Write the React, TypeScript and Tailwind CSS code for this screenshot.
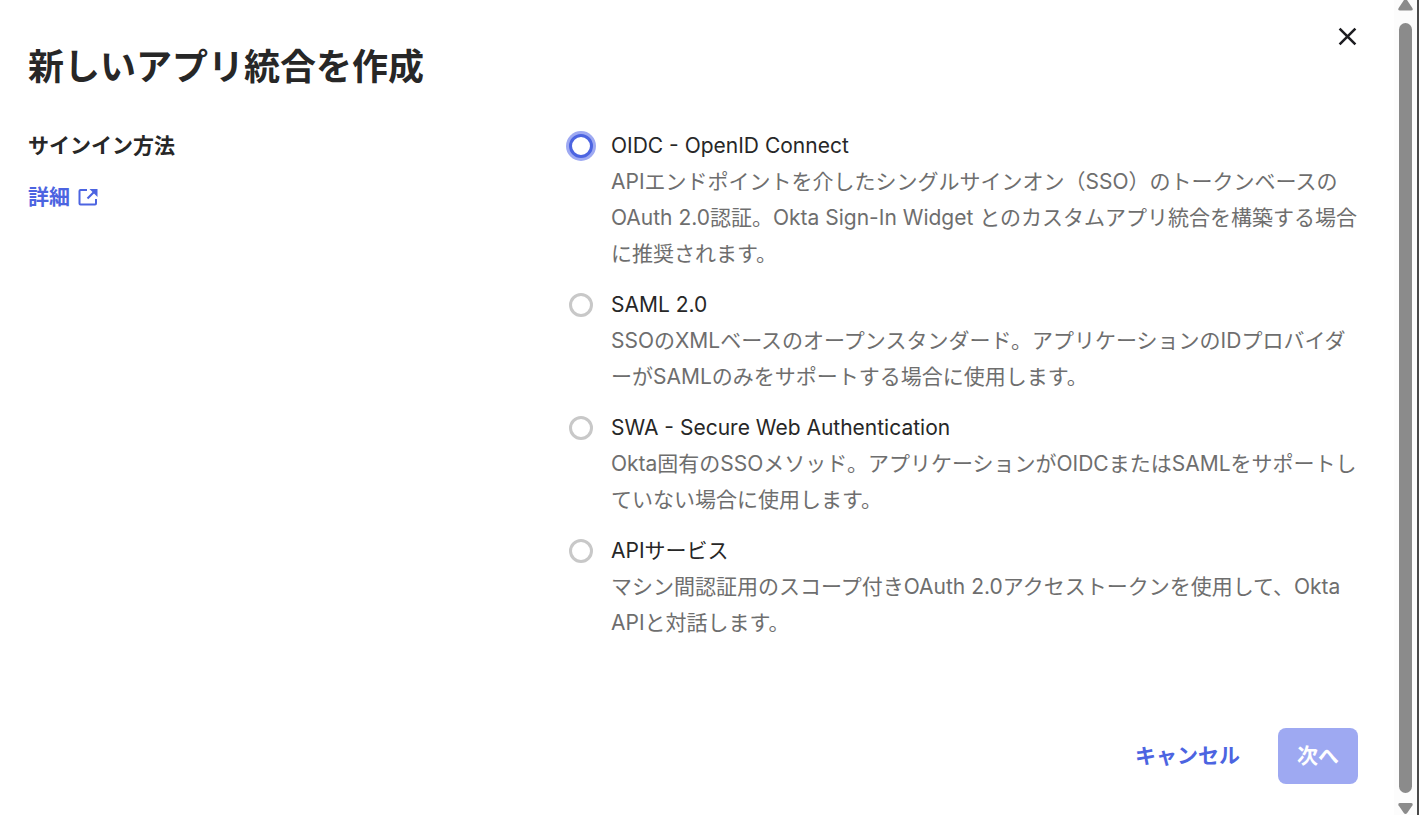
import React, { useState } from "react";

type Option = { id: string; title: string; body: string };

const options: Option[] = [
  {
    id: "oidc",
    title: "OIDC - OpenID Connect",
    body: "APIエンドポイントを介したシングルサインオン（SSO）のトークンベースのOAuth 2.0認証。Okta Sign-In Widget とのカスタムアプリ統合を構築する場合に推奨されます。",
  },
  {
    id: "saml",
    title: "SAML 2.0",
    body: "SSOのXMLベースのオープンスタンダード。アプリケーションのIDプロバイダーがSAMLのみをサポートする場合に使用します。",
  },
  {
    id: "swa",
    title: "SWA - Secure Web Authentication",
    body: "Okta固有のSSOメソッド。アプリケーションがOIDCまたはSAMLをサポートしていない場合に使用します。",
  },
  {
    id: "api",
    title: "APIサービス",
    body: "マシン間認証用のスコープ付きOAuth 2.0アクセストークンを使用して、Okta APIと対話します。",
  },
];

function CloseIcon() {
  return (
    <svg viewBox="0 0 24 24" className="size-6" fill="none" stroke="currentColor" strokeWidth="2.6" strokeLinecap="butt" aria-hidden="true">
      <path d="M5.600 4.600 21.400 20.400M21.400 4.600 5.600 20.400" />
    </svg>
  );
}

function ExternalIcon() {
  return (
    <svg viewBox="0 0 20 20" className="size-5" fill="none" stroke="currentColor" strokeWidth="2" aria-hidden="true">
      <path d="M9 3H2.500a1 1 0 0 0-1 1v12.500a1 1 0 0 0 1 1H17a1 1 0 0 0 1-1V12" />
      <path d="M9.500 11.500 16 5" strokeWidth="2.200" />
      <path d="M11.500 2h8v8z" fill="currentColor" stroke="none" />
    </svg>
  );
}

type RowProps = { option: Option; highlighted: boolean; checked: boolean; onSelect: () => void };

function OptionRow({ option, highlighted, checked, onSelect }: RowProps) {
  const ring = highlighted ? "border-[#4c64e1] ring-[3px] ring-[#9ea9f2]" : "border-[#c8c8c8]";
  return (
    <div className="flex gap-[18px]">
      <input
        type="radio"
        name="method"
        id={option.id}
        checked={checked}
        onChange={onSelect}
        aria-describedby={option.id + "-text"}
        className={"mt-1.5 size-6 shrink-0 appearance-none rounded-full border-[3px] bg-white checked:bg-[#4c64e1] " + ring}
      />
      <div className="min-w-0 flex-1">
        <label htmlFor={option.id} className="block text-[#272727]">
          {option.title}
        </label>
        <p id={option.id + "-text"} className="text-[#6e6e6e]">
          {option.body}
        </p>
      </div>
    </div>
  );
}

function ScrollRail() {
  return (
    <div aria-hidden="true" className="flex shrink-0">
      <div className="flex w-[23px] flex-col items-center bg-[#fcfcfc]">
        <svg viewBox="0 0 15 11" className="h-[11px] w-[15px] shrink-0 fill-[#8b8b8b]">
          <path d="M6 0h3l5.500 8.300Q15.200 10.500 13 10.500H2Q-.2 10.500.5 8.300z" />
        </svg>
        <div className="mt-3 w-[13px] flex-1 rounded-full bg-[#8b8b8b]" />
        <svg viewBox="0 0 15 11" className="mt-2.5 mb-px h-[11px] w-[15px] shrink-0 fill-[#8b8b8b]">
          <path d="M2 0h11q2.200 0 1.500 2.200L9.200 10q-1.700 1.800-3.400 0L.5 2.200Q-.2 0 2 0z" />
        </svg>
      </div>
      <div className="w-0.5 bg-[#4a4a4a]" />
    </div>
  );
}

export default function App() {
  const [selected, setSelected] = useState("");
  return (
    <div className="flex min-h-screen bg-white font-['Inter','Noto_Sans_CJK_JP',sans-serif] text-[21px] leading-9 text-[#272727]">
      <main lang="ja" className="flex min-w-0 flex-1 flex-col pr-9 pl-7">
        <header className="flex items-start justify-between">
          <h1 className="pt-10 text-[36px] leading-[54px] font-bold">新しいアプリ統合を作成</h1>
          <button type="button" aria-label="閉じる" className="mt-6 size-6 text-[#1d1d21]">
            <CloseIcon />
          </button>
        </header>
        <form className="flex flex-1 flex-col" onSubmit={(e) => e.preventDefault()}>
          <div className="mt-[34px] flex">
            <div className="w-[541px] shrink-0">
              <h2 id="method-heading" className="font-bold">
                サインイン方法
              </h2>
              <a href="#details" className="mt-[15px] inline-flex items-center gap-2 font-bold text-[#4c64e1]">
                詳細
                <ExternalIcon />
              </a>
            </div>
            <div role="radiogroup" aria-labelledby="method-heading" className="flex min-w-0 flex-1 flex-col gap-[15px]">
              {options.map((option, index) => (
                <OptionRow
                  key={option.id}
                  option={option}
                  highlighted={index === 0}
                  checked={selected === option.id}
                  onSelect={() => setSelected(option.id)}
                />
              ))}
            </div>
          </div>
          <footer className="mt-auto flex items-center justify-end gap-[38px] pt-10 pb-[31px] font-bold">
            <button type="button" className="text-[#4c64e1]">
              キャンセル
            </button>
            <button type="submit" className="h-14 w-20 rounded-lg bg-[#9ea9f2] text-white">
              次へ
            </button>
          </footer>
        </form>
      </main>
      <ScrollRail />
    </div>
  );
}
